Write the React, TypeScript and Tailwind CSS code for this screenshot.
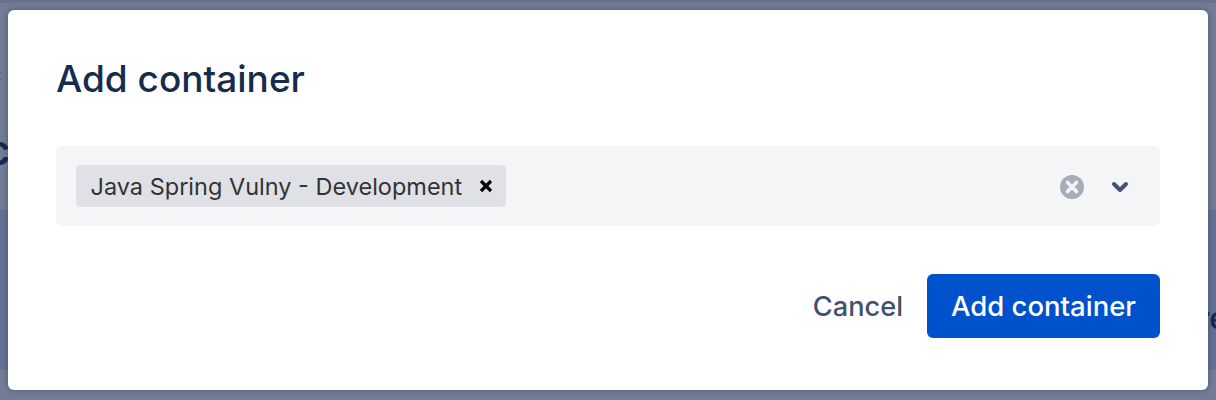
import { ChevronDown } from 'lucide-react';

const font = { fontFamily: 'Inter, sans-serif' };

export default function App() {
	return (
		<div
			className="relative h-[400px] w-[1216px] overflow-hidden bg-[#727c95] pl-2 pt-[10px] font-['Inter',sans-serif]"
			style={font}
		>
			{/* page showing through the overlay */}
			<div className="absolute left-0 top-0 h-[3px] w-full bg-[#67718a]" />
			<div className="absolute left-0 top-[210px] h-[160px] w-full bg-[#627195]" />
			<span className="absolute left-[-6px] top-[66px] text-[14px] leading-[18px] text-[#59637d]">k</span>
			<span className="absolute left-[-14px] top-[128px] text-[42px] font-semibold leading-[44px] text-[#142a52]">
				c
			</span>
			<span className="absolute left-[1198px] top-[301px] text-[30px] font-semibold leading-[34px] text-[#142a52]">
				re
			</span>

			{/* modal */}
			<div className="relative flex h-[380px] w-[1200px] flex-col rounded-md bg-white px-12 shadow-[0_0_6px_rgba(9,30,66,0.35)]">
				<h1 className="mt-[48px] text-[37px] font-[550] leading-[42px] text-[#172b4d]">
					Add container
				</h1>

				<div className="mt-[46px] flex h-20 items-center rounded-md bg-[#f4f5f7] pl-5 pr-[28px]">
					<div className="flex h-[42px] items-center rounded bg-[#dfe1e6] pl-[14.5px] pr-[13px]">
						<span className="mt-[2px] text-[23.5px] leading-[30px] text-[#333333]">
							Java Spring Vulny - Development
						</span>
						<svg viewBox="0 0 14 14" className="ml-[17px] h-[14px] w-[14px]">
							<path d="M2 2l10 10M12 2L2 12" stroke="#000" strokeWidth="3.2" fill="none" />
						</svg>
					</div>
					<svg viewBox="0 0 24 24" className="ml-auto mt-[2px] h-6 w-6">
						<circle cx="12" cy="12" r="12" fill="#a5adba" />
						<path d="M7.5 7.5l9 9M16.5 7.5l-9 9" stroke="#f4f5f7" strokeWidth="3.6" strokeLinecap="round" />
					</svg>
					<ChevronDown size={24} strokeWidth={4} className="ml-[24px] mt-[2px] text-[#42526e]" />
				</div>

				<div className="mt-12 flex items-center justify-end">
					<button className="mr-6 mt-[2px] text-[27.2px] font-medium leading-8 text-[#42526e]">Cancel</button>
					<button className="h-16 w-[233px] rounded-md bg-[#0052cc] pt-[2px] text-[27.5px] font-[550] text-white">
						Add container
					</button>
				</div>
			</div>
		</div>
	);
}
